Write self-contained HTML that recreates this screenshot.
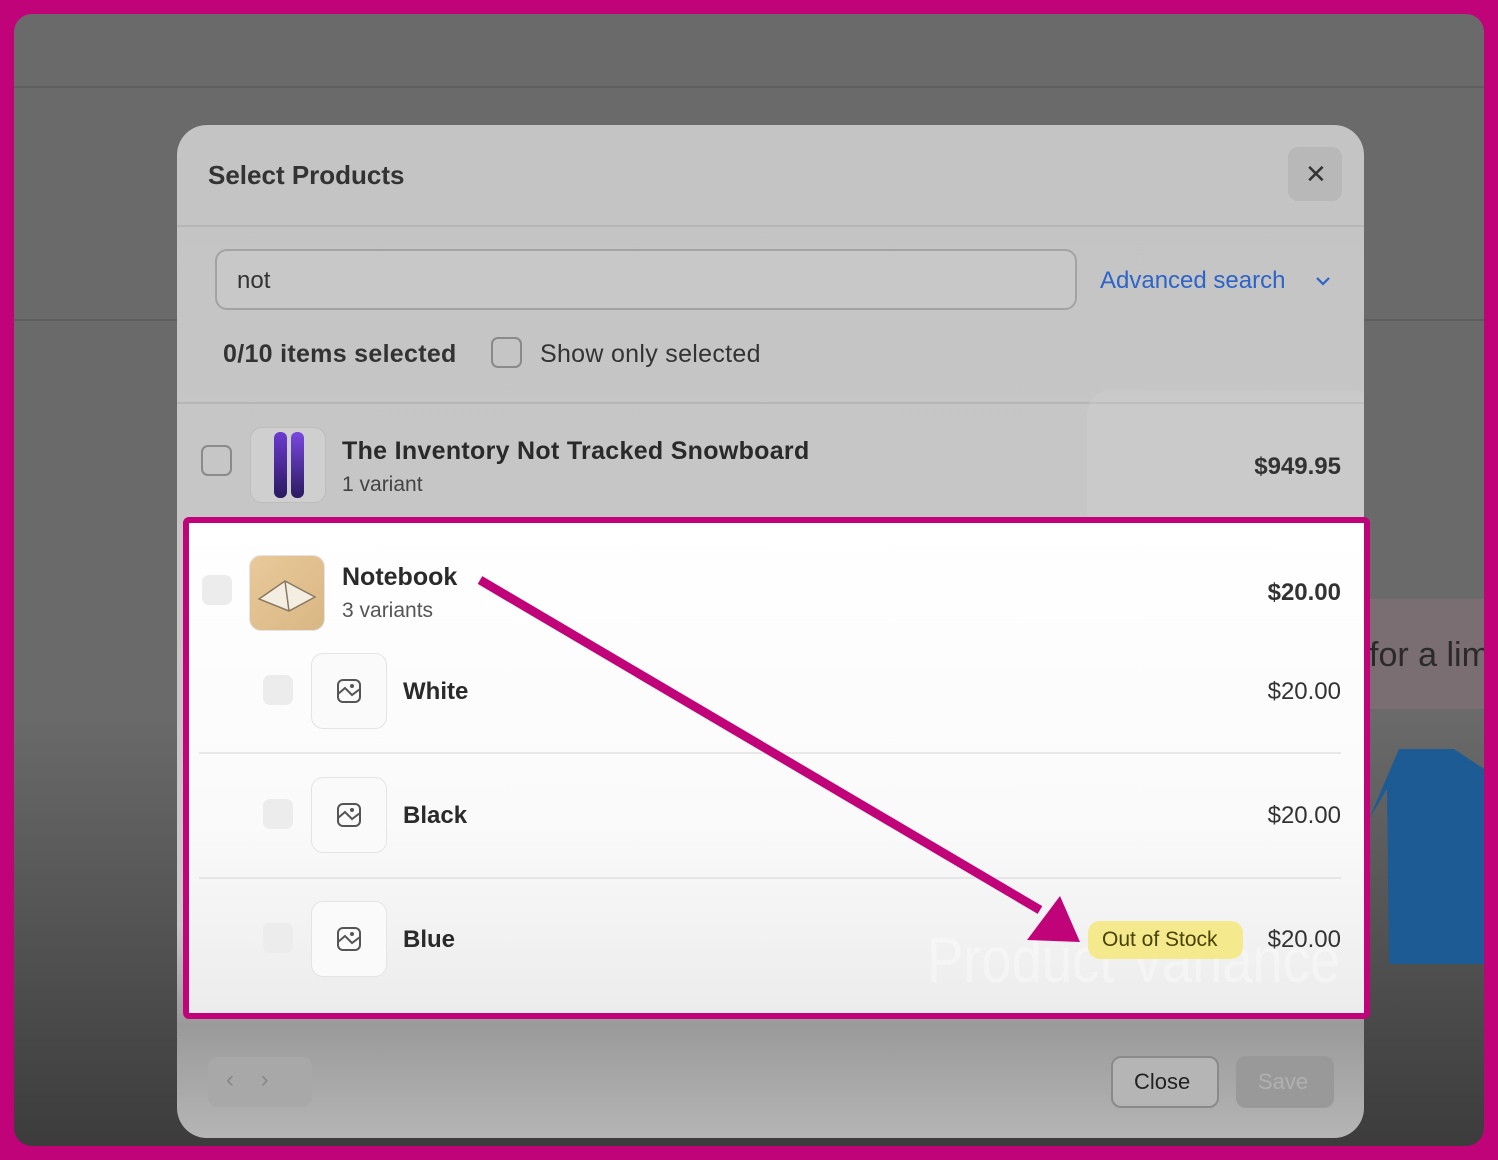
<!DOCTYPE html>
<html><head><meta charset="utf-8"><style>
*{box-sizing:border-box;margin:0;padding:0}
body{width:1498px;height:1160px;background:#c1037a;font-family:"Liberation Sans",sans-serif;position:relative;overflow:hidden}
.abs{position:absolute}
#frame{left:14px;top:14px;width:1470px;height:1132px;border-radius:18px;background:linear-gradient(#6a6a6a 0,#6a6a6a 700px,#3c3c3c 1132px);overflow:hidden}
#modal{left:177px;top:125px;width:1187px;height:1013px;border-radius:30px;background:linear-gradient(#c4c4c4 0,#c8c8c8 800px,#9a9a9a 900px,#b5b5b5 1013px);overflow:hidden}
.t{position:absolute;color:#2a2a2a;white-space:nowrap}
.r{text-align:right}
.cb{position:absolute;width:31px;height:31px;border:2px solid #8a8a8a;border-radius:7px}
.cbl{position:absolute;width:30px;height:30px;border-radius:7px;background:#ececec}
.thumb{position:absolute;width:76px;height:76px;border:1px solid #e4e4e4;border-radius:12px;background:#fafafa}
</style></head><body>
<div id="frame" class="abs">
 <div class="abs" style="left:0;top:72px;width:1470px;height:2px;background:#5e5e5e"></div>
 <div class="abs" style="left:0;top:305px;width:1470px;height:2px;background:#5e5e5e"></div>
 <div class="abs" style="left:1350px;top:585px;width:120px;height:110px;background:#7a6e72"></div>
 <div class="t" style="left:1355px;top:622px;font-size:34px;color:#2a2a2a">for a lim</div>
 <svg class="abs" style="left:1355px;top:735px" width="115" height="215"><path d="M30 0 L85 0 L115 20 L115 215 L20 215 L18 40 L0 70 Z" fill="#1c5b94"/></svg>
</div>
<div id="modal" class="abs">
 <div class="t" style="left:31px;top:35px;font-size:26px;font-weight:bold;color:#333">Select Products</div>
 <div class="abs" style="left:1111px;top:22px;width:54px;height:54px;border-radius:10px;background:#b8b8b8"></div>
 <div class="t" style="left:1128px;top:34px;font-size:26px;color:#333">✕</div>
 <div class="abs" style="left:0;top:100px;width:1187px;height:2px;background:#b6b6b6"></div>
 <div class="abs" style="left:38px;top:124px;width:862px;height:61px;border:2px solid #a3a3a3;border-radius:12px;background:#c8c8c8"></div>
 <div class="t" style="left:60px;top:142px;font-size:24px;color:#333">not</div>
 <div class="t" style="left:923px;top:142px;font-size:24px;color:#2d64c8">Advanced search</div>
 <svg class="abs" style="left:1138px;top:150px" width="16" height="12"><path d="M2 3 L8 9 L14 3" fill="none" stroke="#2d64c8" stroke-width="2.2"/></svg>
 <div class="t" style="left:46px;top:215px;font-size:25px;font-weight:bold;color:#333;letter-spacing:0.3px">0/10 items selected</div>
 <div class="cb" style="left:314px;top:212px"></div>
 <div class="t" style="left:363px;top:215px;font-size:25px;color:#333;letter-spacing:0.3px">Show only selected</div>
 <div class="abs" style="left:0;top:277px;width:1187px;height:2px;background:#b6b6b6"></div>
 <div class="abs" style="left:910px;top:265px;width:290px;height:490px;border-radius:24px;background:rgba(210,210,210,0.35)"></div>
 <div class="cb" style="left:24px;top:320px"></div>
 <div class="thumb" style="left:73px;top:302px;background:#cfcfcf;border-color:#bdbdbd"></div>
 <div class="abs" style="left:97px;top:307px;width:13px;height:66px;border-radius:6px;background:linear-gradient(#6c3ad0,#2a1a60)"></div>
 <div class="abs" style="left:114px;top:307px;width:13px;height:66px;border-radius:6px;background:linear-gradient(#7a48e0,#2a1a60)"></div>
 <div class="t" style="left:165px;top:312px;font-size:25px;font-weight:bold;color:#2a2a2a;letter-spacing:0.3px">The Inventory Not Tracked Snowboard</div>
 <div class="t" style="left:165px;top:348px;font-size:21px;color:#444">1 variant</div>
 <div class="t r" style="right:23px;top:328px;font-size:24px;font-weight:bold;color:#333">$949.95</div>
</div>
<!-- highlight -->
<div class="abs" style="left:183px;top:517px;width:1187px;height:502px;border:6px solid #c1037a;border-radius:6px;background:linear-gradient(#fff 0,#fafafa 300px,#ececec 490px);overflow:hidden">
 <div class="cbl" style="left:13px;top:52px"></div>
 <div class="thumb" style="left:60px;top:32px;background:linear-gradient(135deg,#e9c99a,#d9b684)"></div>
 <svg class="abs" style="left:66px;top:50px" width="64" height="40"><path d="M4 26 L30 8 L60 24 L34 38 Z" fill="#f3ede2" stroke="#8a7a60" stroke-width="1.5"/><path d="M30 8 L34 38" stroke="#8a7a60" stroke-width="1.5"/></svg>
 <div class="t" style="left:153px;top:40px;font-size:25px;font-weight:bold">Notebook</div>
 <div class="t" style="left:153px;top:76px;font-size:21px;color:#555">3 variants</div>
 <div class="t r" style="right:23px;top:56px;font-size:24px;font-weight:bold;color:#333">$20.00</div>

 <div class="cbl" style="left:74px;top:152px"></div>
 <div class="thumb" style="left:122px;top:130px"></div>
 <svg class="abs" style="left:147px;top:155px" width="26" height="26"><rect x="2" y="2" width="22" height="22" rx="5" fill="none" stroke="#555" stroke-width="2"/><path d="M2 16 L9 10 L16 17 L24 11" fill="none" stroke="#555" stroke-width="2"/><circle cx="16" cy="8" r="2" fill="#555"/></svg>
 <div class="t" style="left:214px;top:155px;font-size:24px;font-weight:bold">White</div>
 <div class="t r" style="right:23px;top:155px;font-size:24px;color:#333">$20.00</div>
 <div class="abs" style="left:10px;top:229px;width:1142px;height:2px;background:#e8e8e8"></div>

 <div class="cbl" style="left:74px;top:276px"></div>
 <div class="thumb" style="left:122px;top:254px"></div>
 <svg class="abs" style="left:147px;top:279px" width="26" height="26"><rect x="2" y="2" width="22" height="22" rx="5" fill="none" stroke="#555" stroke-width="2"/><path d="M2 16 L9 10 L16 17 L24 11" fill="none" stroke="#555" stroke-width="2"/><circle cx="16" cy="8" r="2" fill="#555"/></svg>
 <div class="t" style="left:214px;top:279px;font-size:24px;font-weight:bold">Black</div>
 <div class="t r" style="right:23px;top:279px;font-size:24px;color:#333">$20.00</div>
 <div class="abs" style="left:10px;top:354px;width:1142px;height:2px;background:#e6e6e6"></div>

 <div class="cbl" style="left:74px;top:400px"></div>
 <div class="thumb" style="left:122px;top:378px"></div>
 <svg class="abs" style="left:147px;top:403px" width="26" height="26"><rect x="2" y="2" width="22" height="22" rx="5" fill="none" stroke="#555" stroke-width="2"/><path d="M2 16 L9 10 L16 17 L24 11" fill="none" stroke="#555" stroke-width="2"/><circle cx="16" cy="8" r="2" fill="#555"/></svg>
 <div class="t" style="left:214px;top:403px;font-size:24px;font-weight:bold">Blue</div>
 <div class="t" style="left:738px;top:400px;font-size:64px;color:rgba(255,255,255,0.35);transform:scaleX(0.85);transform-origin:left">Product Variance</div>
 <div class="abs" style="left:899px;top:398px;width:155px;height:38px;border-radius:12px;background:#f5e98e"></div>
 <div class="t" style="left:913px;top:405px;font-size:21px;color:#4a4000">Out of Stock</div>
 <div class="t r" style="right:23px;top:403px;font-size:24px;color:#333">$20.00</div>
</div>
<!-- arrow -->
<svg class="abs" style="left:0;top:0" width="1498" height="1160"><line x1="480" y1="580" x2="1040" y2="910" stroke="#c1037a" stroke-width="9"/><polygon points="1027,940 1080,942 1060,896" fill="#c1037a"/></svg>
<!-- footer -->
<div class="abs" style="left:208px;top:1057px;width:104px;height:50px;border-radius:10px;background:#a8a8a8"></div>
<div class="t" style="left:226px;top:1066px;font-size:24px;color:#888">‹&nbsp;&nbsp;&nbsp;&nbsp;›</div>
<div class="abs" style="left:1111px;top:1056px;width:108px;height:52px;border:2px solid #8a8a8a;border-radius:10px;background:#b5b5b5"></div>
<div class="t" style="left:1134px;top:1069px;font-size:22px;color:#222">Close</div>
<div class="abs" style="left:1236px;top:1056px;width:98px;height:52px;border-radius:10px;background:#999"></div>
<div class="t" style="left:1258px;top:1069px;font-size:22px;color:#b0b0b0">Save</div>
</body></html>
